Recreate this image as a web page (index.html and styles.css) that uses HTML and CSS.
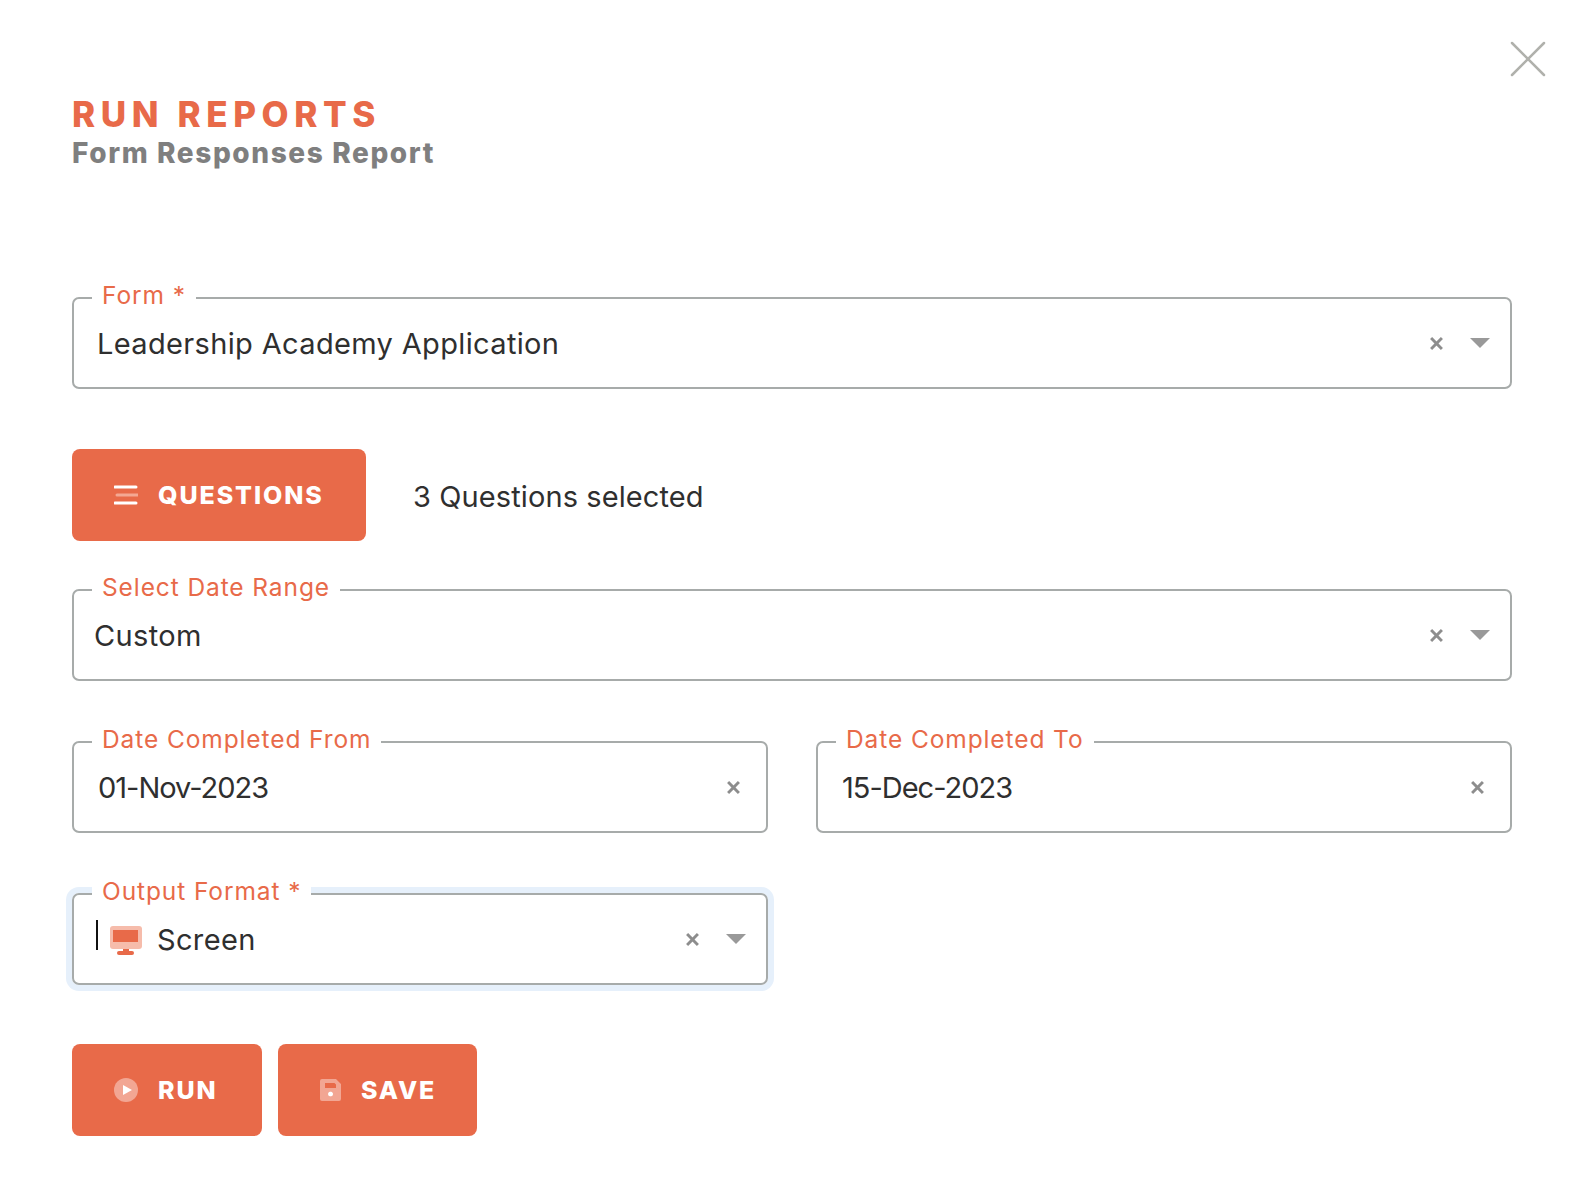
FILE: index.html
```html
<!DOCTYPE html>
<html lang="en">

<head>
  <meta charset="UTF-8">
  <title>Run Reports</title>
  <link rel="stylesheet" href="styles.css">
</head>

<body>
  <main class="dialog">
    <!-- Close -->
    <button class="close-btn" aria-label="Close">
      <svg width="36" height="36" viewBox="0 0 36 36"><path d="M2 2L34 34M34 2L2 34" /></svg>
    </button>

    <!-- Heading -->
    <h1 class="title">RUN REPORTS</h1>
    <h2 class="subtitle">Form Responses Report</h2>

    <!-- Form select -->
    <fieldset class="field field-form">
      <legend>Form *</legend>
      <span class="value">Leadership Academy Application</span>
      <svg class="clear" viewBox="0 0 12 12"><path d="M1 1L11 11M11 1L1 11" /></svg>
      <span class="caret"></span>
    </fieldset>

    <!-- Questions -->
    <div class="questions-row">
      <button class="btn btn-questions">
        <svg class="btn-icon" width="24" height="20" viewBox="0 0 24 20">
          <path class="line" d="M1 2H22M1 18H22" />
          <path class="line-soft" d="M3 10H24" />
        </svg>
        QUESTIONS
      </button>
      <span class="selected-count">3 Questions selected</span>
    </div>

    <!-- Date range -->
    <fieldset class="field field-range">
      <legend>Select Date Range</legend>
      <span class="value value-range">Custom</span>
      <svg class="clear" viewBox="0 0 12 12"><path d="M1 1L11 11M11 1L1 11" /></svg>
      <span class="caret"></span>
    </fieldset>

    <div class="date-row">
      <fieldset class="field">
        <legend>Date Completed From</legend>
        <span class="value value-date">01-Nov-2023</span>
        <svg class="clear clear-date" viewBox="0 0 12 12"><path d="M1 1L11 11M11 1L1 11" /></svg>
      </fieldset>
      <fieldset class="field">
        <legend>Date Completed To</legend>
        <span class="value value-date">15-Dec-2023</span>
        <svg class="clear clear-date" viewBox="0 0 12 12"><path d="M1 1L11 11M11 1L1 11" /></svg>
      </fieldset>
    </div>

    <!-- Output format -->
    <div class="date-row">
      <fieldset class="field field-focus">
        <legend>Output Format *</legend>
        <span class="cursor"></span>
        <svg class="screen-icon" width="32" height="30" viewBox="0 0 32 30">
          <rect class="screen-soft" x="0" y="0" width="32" height="23" rx="3" />
          <rect class="screen-fill" x="3" y="4" width="25" height="12" />
          <rect class="screen-fill" x="13" y="23" width="6" height="3" />
          <rect class="screen-fill" x="7" y="25" width="17" height="4" rx="2" />
        </svg>
        <span class="value">Screen</span>
        <svg class="clear" viewBox="0 0 12 12"><path d="M1 1L11 11M11 1L1 11" /></svg>
        <span class="caret"></span>
      </fieldset>
    </div>

    <!-- Actions -->
    <div class="actions">
      <button class="btn btn-run">
        <svg class="btn-icon" width="24" height="24" viewBox="0 0 24 24">
          <circle class="soft-fill" cx="12" cy="12" r="12" />
          <path class="white-fill" d="M9 7L18 12L9 17Z" />
        </svg>
        RUN
      </button>
      <button class="btn btn-save">
        <svg class="btn-icon" width="21" height="22" viewBox="0 0 21 22">
          <path class="soft-fill" fill-rule="evenodd" d="M2 0H16L21 5V20A2 2 0 0 1 19 22H2A2 2 0 0 1 0 20V2A2 2 0 0 1 2 0ZM5 4V9H16V5.5L14.500 4ZM10.500 12.500A2.500 2.500 0 1 0 10.500 17.500A2.500 2.500 0 1 0 10.500 12.500Z" />
          <circle class="white-fill" cx="10.500" cy="15" r="2.500" />
        </svg>
        SAVE
      </button>
    </div>
  </main>
</body>

</html>
```

FILE: styles.css
```css
* {
  box-sizing: border-box;
}

body {
  margin: 0;
  background: #fff;
  font-family: "Inter", "Open Sans", sans-serif;
  color: #2f2f2f;
}

.dialog {
  position: relative;
  width: 1586px;
  height: 1202px;
  padding: 95px 74px 0 72px;
}

.close-btn {
  position: absolute;
  top: 41px;
  right: 40px;
  padding: 0;
  border: 0;
  background: none;
}

.close-btn svg {
  display: block;
}

.close-btn path {
  stroke: #b0b1ac;
  stroke-width: 2.500;
  stroke-linecap: round;
  fill: none;
}

.title {
  margin: 0;
  height: 38px;
  font-size: 35px;
  line-height: 38px;
  font-weight: 800;
  letter-spacing: 5.600px;
  color: #e86a49;
}

.subtitle {
  margin: 0;
  height: 39px;
  font-size: 28px;
  line-height: 41px;
  font-weight: 800;
  letter-spacing: 1.600px;
  color: #7f7f7f;
}

.field {
  display: flex;
  align-items: center;
  position: relative;
  height: 104px;
  min-width: 0;
  margin: 0;
  padding: 0 20px 12px 23px;
  border: 2px solid #a7abaa;
  border-radius: 7px;
  background: #fff;
}

.field legend {
  height: 26px;
  margin-left: -5px;
  padding: 0 10px;
  font-size: 24.500px;
  line-height: 21px;
  letter-spacing: 0.900px;
  color: #e86a49;
}

.field-form {
  margin-top: 113px;
}

.value {
  flex: 1;
  font-size: 29px;
  letter-spacing: 0.350px;
  color: #2f2f2f;
}

.value-range {
  margin-left: -3px;
}

.value-date {
  margin-left: 1px;
  letter-spacing: -1px;
}

.clear {
  width: 13px;
  height: 13px;
  margin-right: 27px;
  flex-shrink: 0;
}

.clear path {
  stroke: #8d8d8d;
  stroke-width: 2.700;
  fill: none;
}

.clear-date {
  margin-right: 6px;
}

.caret {
  width: 0;
  height: 0;
  flex-shrink: 0;
  border-left: 10px solid transparent;
  border-right: 10px solid transparent;
  border-top: 10px solid #999;
}

.questions-row {
  display: flex;
  align-items: center;
  gap: 47px;
  margin-top: 60px;
}

.selected-count {
  padding-top: 2px;
  font-size: 29px;
  letter-spacing: 0.100px;
  color: #2f2f2f;
}

.btn {
  display: flex;
  align-items: center;
  height: 92px;
  padding: 0 0 0 42px;
  border: 0;
  border-radius: 8px;
  background: #e86a49;
  color: #fff;
  font-family: inherit;
  font-size: 25px;
  font-weight: 800;
  letter-spacing: 1.900px;
}

.btn-icon {
  flex-shrink: 0;
  margin-right: 20px;
}

.btn-questions {
  width: 294px;
}

.line,
.line-soft {
  fill: none;
  stroke-width: 3;
  stroke-linecap: round;
}

.line {
  stroke: #fff;
}

.line-soft {
  stroke: #f4a893;
}

.field-range {
  margin-top: 36px;
}

.date-row {
  display: grid;
  grid-template-columns: 696px 696px;
  gap: 48px;
  margin-top: 48px;
}

.field-focus {
  padding-left: 22px;
  box-shadow: 0 0 0 6px #e6f0fb;
}

.field-focus legend {
  margin-left: -4px;
  background: #fff;
}

.cursor {
  width: 2px;
  height: 30px;
  margin-right: 12px;
  margin-top: -8px;
  background: #111;
}

.screen-icon {
  flex-shrink: 0;
  margin-right: 15px;
  margin-top: 3px;
}

.screen-soft {
  fill: #f6bcab;
}

.screen-fill {
  fill: #e86a49;
}

.actions {
  display: flex;
  gap: 16px;
  margin-top: 59px;
}

.btn-run {
  width: 190px;
}

.btn-save {
  width: 199px;
}

.soft-fill {
  fill: #f2a693;
}

.white-fill {
  fill: #fff;
}
```
